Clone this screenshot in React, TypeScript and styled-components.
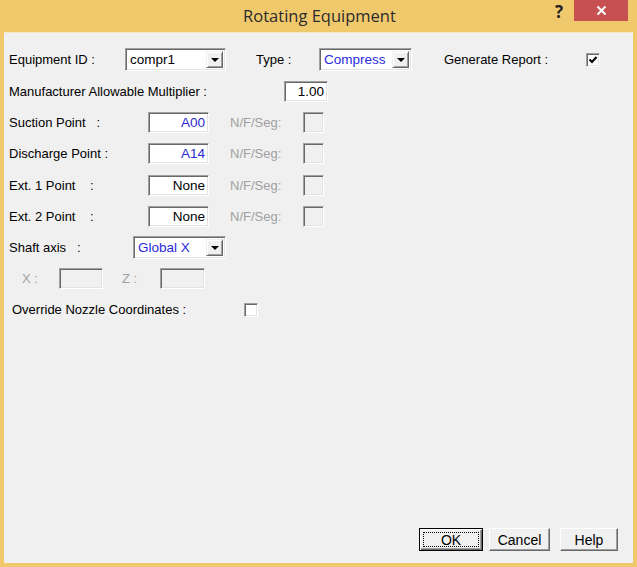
import React from "react";
import styled, { createGlobalStyle, css } from "styled-components";

const Global = createGlobalStyle`
  html, body { margin: 0; padding: 0; background: #f0c96e; }
  body { font-family: "Liberation Sans", Arial, sans-serif; }
`;

const Window = styled.div`
  width: 637px;
  height: 567px;
  background: #f1c96d;
  display: flex;
  flex-direction: column;
  box-sizing: border-box;
`;

const TitleBar = styled.div`
  height: 32px;
  display: flex;
  align-items: flex-start;
  position: relative;
`;

const Title = styled.div`
  flex: 1;
  text-align: center;
  font-family: "Open Sans", "Noto Sans", sans-serif;
  font-size: 16.5px;
  color: #2b2b2b;
  padding-top: 4px;
  padding-left: 2px;
`;

const HelpGlyph = styled.div`
  position: absolute;
  left: 555px;
  top: 0px;
  font-family: "Open Sans", sans-serif;
  font-weight: 700;
  font-size: 17px;
  color: #222;
`;

const CloseBtn = styled.div`
  position: absolute;
  left: 574px;
  top: 0;
  width: 54px;
  height: 21px;
  background: #c75050;
  display: flex;
  align-items: center;
  justify-content: center;
`;

const Client = styled.div`
  flex: 1;
  margin: 0 4px 4px 4px;
  background: #f0f0f0;
  border-top: 1px solid #f7e7c4;
  display: flex;
  flex-direction: column;
  font-size: 13px;
  color: #000;
`;

const Row = styled.div<{ $top: number; $h: number; $left?: number }>`
  display: flex;
  align-items: center;
  height: ${(p) => p.$h}px;
  margin-top: ${(p) => p.$top}px;
  padding-left: ${(p) => p.$left ?? 5}px;
`;

const Label = styled.div<{ $w: number; $disabled?: boolean; $gap?: number }>`
  width: ${(p) => p.$w}px;
  flex: none;
  white-space: nowrap;
  margin-left: ${(p) => p.$gap ?? 0}px;
  color: ${(p) => (p.$disabled ? "#a0a0a0" : "#000")};
`;

const sunken = css`
  box-sizing: border-box;
  border-style: solid;
  border-width: 1px;
  border-color: #a0a0a0 #ffffff #ffffff #a0a0a0;
  box-shadow: inset 1px 1px 0 #696969, inset -1px -1px 0 #e3e3e3;
`;

const Field = styled.div<{ $w: number; $h?: number; $blue?: boolean; $disabled?: boolean; $gap?: number }>`
  ${sunken};
  width: ${(p) => p.$w}px;
  height: ${(p) => p.$h ?? 21}px;
  flex: none;
  margin-left: ${(p) => p.$gap ?? 0}px;
  background: ${(p) => (p.$disabled ? "#f0f0f0" : "#fff")};
  color: ${(p) => (p.$blue ? "#2a2ad0" : "#000")};
  display: flex;
  align-items: center;
  justify-content: flex-end;
  padding: 0 3px 0 2px;
  font-size: 13.5px;
`;

const Combo = styled.div<{ $w: number; $gap?: number; $blue?: boolean }>`
  ${sunken};
  width: ${(p) => p.$w}px;
  height: 23px;
  flex: none;
  margin-left: ${(p) => p.$gap ?? 0}px;
  background: #fff;
  display: flex;
  align-items: stretch;
  padding: 2px;
  color: ${(p) => (p.$blue ? "#2a2ae0" : "#000")};
  font-size: 13.5px;
`;

const ComboText = styled.div`
  flex: 1;
  display: flex;
  align-items: center;
  padding-left: 2px;
  white-space: nowrap;
  overflow: hidden;
`;

const DropBtn = styled.div`
  width: 17px;
  flex: none;
  box-sizing: border-box;
  background: #f0f0f0;
  border-style: solid;
  border-width: 1px;
  border-color: #f0f0f0 #696969 #696969 #f0f0f0;
  box-shadow: inset 1px 1px 0 #fff, inset -1px -1px 0 #a0a0a0;
  display: flex;
  align-items: center;
  justify-content: center;
`;

const Arrow = styled.div`
  width: 0;
  height: 0;
  border-left: 4px solid transparent;
  border-right: 4px solid transparent;
  border-top: 4px solid #000;
  margin-top: 1px;
`;

const Check = styled.div<{ $gap?: number }>`
  ${sunken};
  width: 14px;
  height: 14px;
  flex: none;
  background: #fff;
  margin-left: ${(p) => p.$gap ?? 0}px;
  display: flex;
  align-items: center;
  justify-content: center;
`;

const Spacer = styled.div`
  flex: 1;
`;

const ButtonRow = styled.div`
  display: flex;
  justify-content: flex-end;
  gap: 6px;
  padding: 0 15px 12px 0;
`;

const Button = styled.div<{ $w: number; $default?: boolean; $ml?: number }>`
  box-sizing: border-box;
  width: ${(p) => p.$w}px;
  height: 23px;
  margin-left: ${(p) => p.$ml ?? 0}px;
  background: #f0f0f0;
  border-style: solid;
  border-width: 1px;
  border-color: ${(p) => (p.$default ? "#000" : "#fff #696969 #696969 #fff")};
  box-shadow: ${(p) =>
    p.$default
      ? "inset 1px 1px 0 #fff, inset -1px -1px 0 #696969, inset -2px -2px 0 #a0a0a0"
      : "inset -1px -1px 0 #a0a0a0"};
  display: flex;
  align-items: center;
  justify-content: center;
  font-size: 14px;
  color: #000;
  padding: 3px;
`;

const Focus = styled.div`
  flex: 1;
  align-self: stretch;
  border: 1px dotted #000;
  display: flex;
  align-items: center;
  justify-content: center;
`;

const CheckMark = () => (
  <svg width="10" height="10" viewBox="0 0 10 10">
    <path d="M1.5 4.5 L4 7 L8.5 2" stroke="#000" strokeWidth="2" fill="none" />
  </svg>
);

const points = [
  { label: "Suction Point   :", value: "A00", blue: true, top: 10 },
  { label: "Discharge Point :", value: "A14", blue: true, top: 10 },
  { label: "Ext. 1 Point    :", value: "None", blue: false, top: 11 },
  { label: "Ext. 2 Point    :", value: "None", blue: false, top: 10 },
];

const Pre = styled.span`
  white-space: pre;
`;

export default function App() {
  return (
    <>
      <Global />
      <Window>
        <TitleBar>
          <Title>Rotating Equipment</Title>
          <HelpGlyph>?</HelpGlyph>
          <CloseBtn>
            <svg width="11" height="11" viewBox="0 0 11 11">
              <path d="M1.5 1.5 L9.5 9.5 M9.5 1.5 L1.5 9.5" stroke="#fff" strokeWidth="2" />
            </svg>
          </CloseBtn>
        </TitleBar>
        <Client>
          <Row $top={15} $h={23}>
            <Label $w={116}>Equipment ID :</Label>
            <Combo $w={101}>
              <ComboText>compr1</ComboText>
              <DropBtn>
                <Arrow />
              </DropBtn>
            </Combo>
            <Label $w={63} $gap={30}>Type :</Label>
            <Combo $w={93} $blue>
              <ComboText>Compress</ComboText>
              <DropBtn>
                <Arrow />
              </DropBtn>
            </Combo>
            <Label $w={142} $gap={32}>Generate Report :</Label>
            <Check>
              <CheckMark />
            </Check>
          </Row>
          <Row $top={10} $h={21}>
            <Label $w={275}>Manufacturer Allowable Multiplier :</Label>
            <Field $w={44}>1.00</Field>
          </Row>
          {points.map((p) => (
            <Row key={p.label} $top={p.top} $h={21}>
              <Label $w={139}>
                <Pre>{p.label}</Pre>
              </Label>
              <Field $w={61} $blue={p.blue}>
                {p.value}
              </Field>
              <Label $w={73} $gap={21} $disabled>
                N/F/Seg:
              </Label>
              <Field $w={21} $disabled />
            </Row>
          ))}
          <Row $top={9} $h={23}>
            <Label $w={124}>
              <Pre>Shaft axis   :</Pre>
            </Label>
            <Combo $w={93} $blue>
              <ComboText>Global X</ComboText>
              <DropBtn>
                <Arrow />
              </DropBtn>
            </Combo>
          </Row>
          <Row $top={9} $h={21} $left={18}>
            <Label $w={37} $disabled>
              <Pre>X :</Pre>
            </Label>
            <Field $w={44} $disabled />
            <Label $w={38} $gap={19} $disabled>
              <Pre>Z :</Pre>
            </Label>
            <Field $w={45} $disabled />
          </Row>
          <Row $top={10} $h={21} $left={8}>
            <Label $w={232}>Override Nozzle Coordinates  :</Label>
            <Check />
          </Row>
          <Spacer />
          <ButtonRow>
            <Button $w={64} $default>
              <Focus>OK</Focus>
            </Button>
            <Button $w={61}>Cancel</Button>
            <Button $w={58} $ml={4}>Help</Button>
          </ButtonRow>
        </Client>
      </Window>
    </>
  );
}
